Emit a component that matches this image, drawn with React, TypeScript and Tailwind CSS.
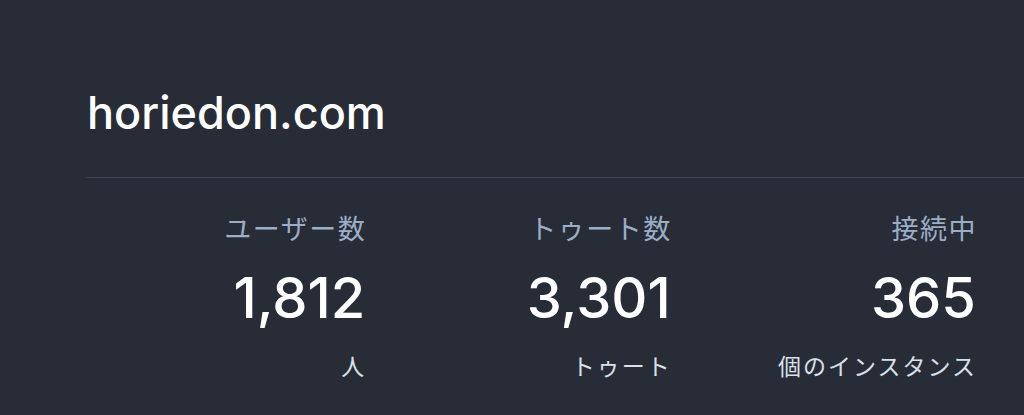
export default function App() {
  const stats = [
    { label: 'ユーザー数', value: '1,812', unit: '人' },
    { label: 'トゥート数', value: '3,301', unit: 'トゥート' },
    { label: '接続中', value: '365', unit: '個のインスタンス' },
  ];

  return (
    <div
      className="w-[1024px] h-[415px] overflow-hidden bg-[#282c37]"
      style={{ fontFamily: 'Inter, "Noto Sans CJK JP", sans-serif' }}
    >
      <div className="pl-[86px] pt-[84px]">
        {/* Title */}
        <h1 className="pl-[1px] text-[45px] leading-[58px] font-medium text-white">
          horiedon.com
        </h1>

        {/* Divider */}
        <div className="mt-[35px] h-px bg-[#3d4354]" />
      </div>

      {/* Stats */}
      <div className="flex w-[976px] pl-[60px] pt-[36px]">
        {stats.map((s) => (
          <div key={s.label} className="flex-1 flex flex-col items-end">
            <div className="text-[27px] leading-[32px] text-[#9baec8] tracking-[1.5px] mr-[-1px]">
              {s.label}
            </div>
            <div className="mt-[20px] text-[56px] leading-[64px] font-medium text-white">
              {s.value}
            </div>
            <div className="mt-[23px] text-[23px] leading-[28px] text-[#d9e1e8] tracking-[2px] mr-[-1px]">
              {s.unit}
            </div>
          </div>
        ))}
      </div>
    </div>
  );
}
